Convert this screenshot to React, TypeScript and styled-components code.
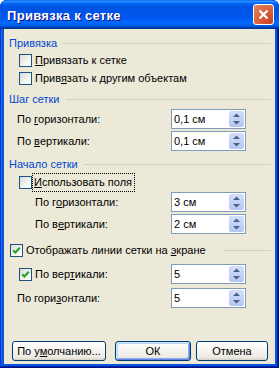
import styled, { createGlobalStyle } from "styled-components";

const GlobalStyle = createGlobalStyle`
  html, body {
    margin: 0;
    padding: 0;
    background: #ffffff;
  }
  body {
    font-family: "Liberation Sans", Arial, sans-serif;
    font-size: 11px;
    color: #000000;
  }
`;

const Window = styled.div`
  width: 279px;
  height: 368px;
  display: flex;
  flex-direction: column;
  background: #0855dd;
  border-radius: 7px 7px 0 0;
  box-shadow: inset -1px -1px #00138c, inset 1px 1px #0831d9,
    inset -2px -2px #001ea0, inset 2px 2px #166aee;
  overflow: hidden;
`;

const TitleBar = styled.div`
  height: 29px;
  flex: none;
  display: flex;
  align-items: center;
  justify-content: space-between;
  padding: 0 5px 0 7px;
  box-sizing: border-box;
  background: linear-gradient(
    to bottom,
    #0058ee 0%,
    #3593ff 4%,
    #288eff 6%,
    #127dff 8%,
    #036ffc 10%,
    #0262ee 14%,
    #0057e5 20%,
    #0054e3 24%,
    #0055eb 56%,
    #005bf5 66%,
    #026afe 76%,
    #0062ef 86%,
    #0052d6 92%,
    #0040ab 94%,
    #003092 100%
  );
  border-radius: 7px 7px 0 0;
`;

const Title = styled.span`
  font-family: "Liberation Sans", Arial, sans-serif;
  font-weight: bold;
  font-size: 13px;
  color: #ffffff;
  text-shadow: 1px 1px #0f1089;
  letter-spacing: 0.3px;
  padding-top: 1px;
`;

const CloseButton = styled.div`
  width: 21px;
  height: 21px;
  box-sizing: border-box;
  border: 1px solid #ffffff;
  border-radius: 3px;
  background: radial-gradient(
    circle at 85% 85%,
    #cc4622 0%,
    #d65a35 40%,
    #e5865f 100%
  );
  display: flex;
  align-items: center;
  justify-content: center;
`;

const Client = styled.div`
  flex: 1;
  margin: 0 4px 4px 4px;
  background: #ece9d8;
  display: flex;
  flex-direction: column;
  padding: 7px 4px 0 5px;
`;

const GroupHeader = styled.div<{ $gap?: number }>`
  height: 14px;
  margin-top: ${(p) => p.$gap ?? 0}px;
  display: flex;
  align-items: center;
  color: #0046d5;
  span {
    white-space: nowrap;
    margin-right: 6px;
  }
  &::after {
    content: "";
    flex: 1;
    height: 1px;
    background: #d0d0bf;
    margin-top: 1px;
  }
`;

const CheckRow = styled.div<{ $indent: number; $gap?: number; $line?: boolean }>`
  height: 18px;
  margin-top: ${(p) => p.$gap ?? 0}px;
  padding-left: ${(p) => p.$indent}px;
  display: flex;
  align-items: center;
  &::after {
    content: "";
    display: ${(p) => (p.$line ? "block" : "none")};
    flex: 1;
    height: 1px;
    background: #d0d0bf;
    margin-left: 18px;
  }
`;

const Box = styled.span`
  width: 13px;
  height: 13px;
  flex: none;
  box-sizing: border-box;
  border: 1px solid #1c5180;
  background: linear-gradient(135deg, #dcdcd7 0%, #f4f4f1 60%, #ffffff 100%);
  display: flex;
  align-items: center;
  justify-content: center;
`;

const CheckLabel = styled.span<{ $focus?: boolean }>`
  margin-left: ${(p) => (p.$focus ? 1 : 3)}px;
  padding: ${(p) => (p.$focus ? "2px 2px 2px 1px" : "0")};
  outline: ${(p) => (p.$focus ? "1px dotted #000000" : "none")};
  outline-offset: 0;
  white-space: nowrap;
  line-height: 13px;
`;

const FieldRow = styled.div<{ $gap?: number }>`
  height: 22px;
  margin-top: ${(p) => p.$gap ?? 0}px;
  display: flex;
  align-items: center;
`;

const FieldLabel = styled.span<{ $indent: number }>`
  padding-left: ${(p) => p.$indent}px;
  width: 162px;
  flex: none;
  box-sizing: border-box;
  white-space: nowrap;
  display: flex;
  align-items: center;
`;

const FieldLead = styled.div`
  width: 162px;
  flex: none;
  display: flex;
  align-items: center;
`;

const Spin = styled.div`
  width: 75px;
  height: 20px;
  box-sizing: border-box;
  border: 1px solid #7f9db9;
  background: #ffffff;
  display: flex;
  align-items: stretch;
  padding: 1px;
`;

const SpinValue = styled.span`
  flex: 1;
  padding-left: 1px;
  display: flex;
  align-items: center;
`;

const SpinButton = styled.span`
  width: 15px;
  border-radius: 2px;
  background: linear-gradient(to bottom, #d3def9 0%, #c3d2f6 50%, #b4c6f3 100%);
  display: flex;
  align-items: center;
  justify-content: center;
`;

const Key = styled.u`
  text-decoration: underline;
  text-underline-offset: 1px;
`;

const ButtonBar = styled.div`
  margin-top: auto;
  margin-bottom: 3px;
  display: flex;
  padding-left: 3px;
`;

const Button = styled.button<{ $w: number; $gap?: number; $default?: boolean }>`
  width: ${(p) => p.$w}px;
  height: 20px;
  margin-left: ${(p) => p.$gap ?? 0}px;
  padding: 0;
  font-family: "Liberation Sans", Arial, sans-serif;
  font-size: 11px;
  color: #000000;
  border: 1px solid #003c74;
  border-radius: 3px;
  background: linear-gradient(
    to bottom,
    #ffffff 0%,
    #f6f5f1 40%,
    #ecebe4 85%,
    #d6d0c5 100%
  );
  box-shadow: ${(p) =>
    p.$default
      ? "inset 1px 1px #cee7ff, inset -1px -1px #6982ee, inset 2px 2px #bcd4f6, inset -2px -2px #89ade4"
      : "none"};
`;

const Check = () => (
  <svg width="9" height="9" viewBox="0 0 9 9">
    <polyline
      points="1.2,4.2 3.4,6.5 7.8,1.8"
      fill="none"
      stroke="#21a121"
      strokeWidth="2"
    />
  </svg>
);

const Arrows = () => (
  <svg width="9" height="16" viewBox="0 0 9 16">
    <path d="M4.5 2.5 L8 6 L1 6 Z" fill="#4d6185" />
    <path d="M4.5 13.5 L8 10 L1 10 Z" fill="#4d6185" />
  </svg>
);

function CheckBox({ checked }: { checked?: boolean }) {
  return <Box>{checked && <Check />}</Box>;
}

function SpinField({ value }: { value: string }) {
  return (
    <Spin>
      <SpinValue>{value}</SpinValue>
      <SpinButton>
        <Arrows />
      </SpinButton>
    </Spin>
  );
}

function App() {
  return (
    <>
      <GlobalStyle />
      <Window>
        <TitleBar>
          <Title>Привязка к сетке</Title>
          <CloseButton>
            <svg width="11" height="11" viewBox="0 0 11 11">
              <path
                d="M1.5 1.5 L9.5 9.5 M9.5 1.5 L1.5 9.5"
                stroke="#ffffff"
                strokeWidth="2.4"
              />
            </svg>
          </CloseButton>
        </TitleBar>
        <Client>
          <GroupHeader>
            <span>Привязка</span>
          </GroupHeader>
          <CheckRow $indent={10} $gap={1}>
            <CheckBox />
            <CheckLabel>
              <Key>П</Key>ривязать к сетке
            </CheckLabel>
          </CheckRow>
          <CheckRow $indent={10}>
            <CheckBox />
            <CheckLabel>
              Прив<Key>я</Key>зать к другим объектам
            </CheckLabel>
          </CheckRow>

          <GroupHeader $gap={5}>
            <span>Шаг сетки</span>
          </GroupHeader>
          <FieldRow $gap={2}>
            <FieldLabel $indent={8}>
              По&nbsp;<Key>г</Key>оризонтали:
            </FieldLabel>
            <SpinField value="0,1 см" />
          </FieldRow>
          <FieldRow>
            <FieldLabel $indent={8}>
              По&nbsp;<Key>в</Key>ертикали:
            </FieldLabel>
            <SpinField value="0,1 см" />
          </FieldRow>

          <GroupHeader $gap={5}>
            <span>Начало сетки</span>
          </GroupHeader>
          <CheckRow $indent={10} $gap={2}>
            <CheckBox />
            <CheckLabel $focus>
              <Key>И</Key>спользовать поля
            </CheckLabel>
          </CheckRow>
          <FieldRow>
            <FieldLabel $indent={26}>
              По&nbsp;г<Key>о</Key>ризонтали:
            </FieldLabel>
            <SpinField value="3 см" />
          </FieldRow>
          <FieldRow>
            <FieldLabel $indent={26}>
              По&nbsp;в<Key>е</Key>ртикали:
            </FieldLabel>
            <SpinField value="2 см" />
          </FieldRow>

          <CheckRow $indent={1} $gap={6} $line>
            <CheckBox checked />
            <CheckLabel>
              Отображать линии сетки на <Key>э</Key>кране
            </CheckLabel>
          </CheckRow>
          <FieldRow $gap={4}>
            <FieldLead>
              <CheckRow $indent={10}>
                <CheckBox checked />
                <CheckLabel>
                  По вер<Key>т</Key>икали:
                </CheckLabel>
              </CheckRow>
            </FieldLead>
            <SpinField value="5" />
          </FieldRow>
          <FieldRow $gap={2}>
            <FieldLabel $indent={8}>
              По&nbsp;гори<Key>з</Key>онтали:
            </FieldLabel>
            <SpinField value="5" />
          </FieldRow>

          <ButtonBar>
            <Button $w={94}>
              По у<Key>м</Key>олчанию...
            </Button>
            <Button $w={76} $gap={9} $default>
              ОК
            </Button>
            <Button $w={72} $gap={5}>
              Отмена
            </Button>
          </ButtonBar>
        </Client>
      </Window>
    </>
  );
}

export default App;
